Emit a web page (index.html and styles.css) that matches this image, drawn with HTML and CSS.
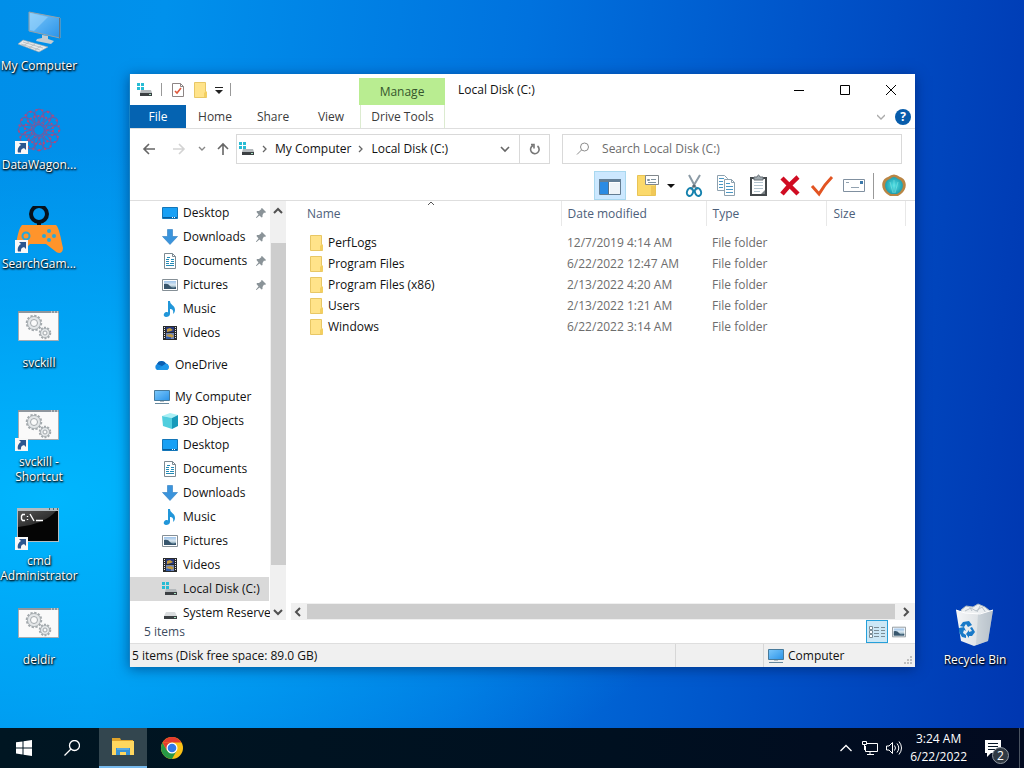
FILE: index.html
```html
<!DOCTYPE html>
<html lang="en">
<head>
<meta charset="utf-8">
<title>Local Disk (C:)</title>
<link rel="stylesheet" href="styles.css">
</head>
<body>
<svg class="sprite" aria-hidden="true">
  <defs>
    <linearGradient id="screen" x1="0" y1="0" x2="1" y2="1"><stop offset="0" stop-color="#7cc8fb"/><stop offset="1" stop-color="#2a93e8"/></linearGradient>
    <linearGradient id="picture" x1="0" y1="0" x2="0" y2="1"><stop offset="0" stop-color="#9dc3ea"/><stop offset=".5" stop-color="#dbe8f0"/><stop offset="1" stop-color="#3d6a80"/></linearGradient>
    <linearGradient id="bin" x1="0" y1="0" x2="1" y2="0"><stop offset="0" stop-color="#f4f6f8"/><stop offset=".6" stop-color="#dfe3e6"/><stop offset="1" stop-color="#b4bdc5"/></linearGradient>
    <linearGradient id="console" x1="0" y1="0" x2="1" y2="1"><stop offset="0" stop-color="#555"/><stop offset="1" stop-color="#181818"/></linearGradient>
    <radialGradient id="shellfill"><stop offset="0" stop-color="#4fe0e4"/><stop offset="1" stop-color="#1f9fb0"/></radialGradient>
  </defs>
  <symbol id="i-drive" viewBox="0 0 16 16"><path d="M0 1h3v3H0zM4 1h3v3H4zM0 5h3v3H0zM4 5h3v3H4z" fill="#27bcd4"/><path d="M4 8h10l1 3H3z" fill="#b4b9bc"/><path d="M3 11h12v3H3z" fill="#3c4043"/><path d="M12 12h2v1h-2z" fill="#a6e3c0"/></symbol>
  <symbol id="i-drive-plain" viewBox="0 0 16 16"><path d="M4 7h9l2 4H2z" fill="#d9dcde"/><path d="M2 11h13v3H2z" fill="#3c4043"/><path d="M12 12h2v1h-2z" fill="#a6e3c0"/></symbol>
  <symbol id="i-desktop" viewBox="0 0 16 16"><path d="M.5 2.500h15v11H.5z" fill="#18a0f5" stroke="#1476b8"/><path d="M1 12h14v1H1z" fill="#075d9c"/><path d="M10 12h1v1h-1zM12 12h1v1h-1z" fill="#fff"/></symbol>
  <symbol id="i-download" viewBox="0 0 16 16"><path d="M5.500.5h5v7h5L8 15.500.5 7.500h5z" fill="#3a94dc" stroke="#2b7cbf" stroke-width=".6"/></symbol>
  <symbol id="i-document" viewBox="0 0 16 16"><path d="M2.500.5h8l3 3v12h-11z" fill="#fff" stroke="#7d8a92"/><path d="M10.500.5v3h3" fill="none" stroke="#7d8a92"/><path d="M5 4.500h3M4 6.500h3M9 6.500h3M4 8.500h3M9 8.500h3M4 10.500h3M8 10.500h4M4 12.500h8" stroke="#248bb6"/></symbol>
  <symbol id="i-picture" viewBox="0 0 16 16"><path d="M.5 2.500h15v11H.5z" fill="#fff" stroke="#858f96"/><path d="M2 4h12v8H2z" fill="url(#picture)"/><path d="M2 7q4-1 6 2t6 1v2H2z" fill="#38566d"/></symbol>
  <symbol id="i-music" viewBox="0 0 16 16"><path d="M6 0h2c0 4 5 4 5 9 0 2-1 3-2 4 1-4-1-5-3-5v5c0 2-2 3-4 3-3 0-3-4 0-5 1 0 1 0 2 .3z" fill="#2196d9"/></symbol>
  <symbol id="i-video" viewBox="0 0 16 16"><path d="M1 1h14v14H1z" fill="#282a2c"/><path d="M2.500 2v12M13.500 2v12" stroke="#e9e9e9" stroke-dasharray="1 1"/><path d="M4 2h8v5H4z" fill="#26387f"/><path d="M4 8h8v6H4z" fill="#7187b8"/><path d="M5 4l3-1 3 2-2 1-4 1zM4 10l5-1 3 2-3 2z" fill="#c49b3d"/><path d="M4 12h5v2H4z" fill="#345da6"/></symbol>
  <symbol id="i-cloud" viewBox="0 0 16 16"><path d="M3 13a3.500 3.500 0 0 1 0-6 5 5 0 0 1 9-.5 3.500 3.500 0 0 1 1 6.500z" fill="#178ae0"/><path d="M3 7a5 5 0 0 1 9-.5L8 9z" fill="#0b5eb1"/><path d="M3 13l9-6.500a3.500 3.500 0 0 1 1 6.500z" fill="#1f98ea"/></symbol>
  <symbol id="i-computer" viewBox="0 0 16 16"><path d="M.5 1.500h15v10H.5z" fill="url(#screen)" stroke="#477a9b"/><path d="M6 12h4v1H6z" fill="#b4c0c7"/><path d="M1 14.500h14" stroke="#67889d"/></symbol>
  <symbol id="i-cube" viewBox="0 0 16 16"><path d="M0 3l8-3 8 2-6 3z" fill="#aaf0f5"/><path d="M0 3l10 2v11L1 13z" fill="#50cede"/><path d="M10 5l6-3v11l-6 3z" fill="#169aba"/></symbol>
  <symbol id="i-folder" viewBox="0 0 14 16"><path d="M.5.5h11v9l1 1v5H.5z" fill="#ffe38a" stroke="#e8c765"/><path d="M10 15v-4l2-2 1 1v5z" fill="#f3cf61"/></symbol>
  <symbol id="i-pin" viewBox="0 0 12 12"><path d="M7 1l4 4-1 1-1-.4L7.500 8v2l-1 .5L4.500 8.500 1.500 11H1v-.5L3.500 7.500 1.500 5l.5-1h2l2.500-2L6 1.500z" fill="#8a9398"/></symbol>
  <symbol id="i-check-doc" viewBox="0 0 14 16"><path d="M1.500 1.500h8l3 3v10h-11z" fill="#fff" stroke="#8d8585"/><path d="M9.500 1.500v3h3" fill="none" stroke="#8d8585"/><path d="M4 9l2 2 4-5" fill="none" stroke="#df583b" stroke-width="1.600"/></symbol>
  <symbol id="i-shortcut" viewBox="0 0 13 13"><path d="M0 0h13v13H0z" fill="#f8f8f8"/><path d="M4 2h7v7L9 7c-3 1-3 2-3 4.500H3C2 8 4 5 6 4z" fill="#2c568f"/></symbol>
  <symbol id="i-gears" viewBox="0 0 48 48"><path d="M3.500 7.500h40v28h-40z" fill="#fafafa" stroke="#a7acb1"/><path d="M3 6h41v2H3z" fill="#8e969d"/><path d="M36 7h1M39 7h1M42 7h1" stroke="#fff"/><g fill="#e4e7e9" stroke="#a3a9ad"><circle cx="19" cy="18" r="7" stroke-width="2.500" stroke-dasharray="2.200 1.460"/><circle cx="19" cy="18" r="6.500" stroke-width=".8"/><circle cx="19" cy="18" r="3.500" fill="#fafafa"/><circle cx="30" cy="28" r="5" stroke-width="2.500" stroke-dasharray="1.900 1.240"/><circle cx="30" cy="28" r="4.500" stroke-width=".8"/><circle cx="30" cy="28" r="2" fill="#fafafa"/></g></symbol>
</svg>

<main class="desktop">
  <nav class="desktop-icons" aria-label="Desktop">
    <button class="shortcut"><svg viewBox="0 0 48 48"><path d="M14 4l31 6v20l-31-7z" fill="url(#screen)" stroke="#93a2ab"/><path d="M45 10v20l-1 1V10z" fill="#66737b"/><path d="M15 5l18 4-14 14-4-1z" fill="#a6d9fb" opacity=".5"/><path d="M27 27l6 1v3l6 2-3 3-15-3 1-2 5-1z" fill="#c3cdd3"/><path d="M8 32l25 7-9 5L3 36z" fill="#e6eaec" stroke="#9da5aa" stroke-width=".6"/><path d="M8 34l20 6M6 36l19 6M14 34l-6 4M20 36l-6 4M26 38l-6 4" stroke="#aab2b7" stroke-width=".7"/></svg><span>My Computer</span></button>
    <button class="shortcut"><svg viewBox="0 0 48 48"><g fill="none" stroke="#7a559d"><g id="petals"><ellipse cx="24" cy="10" rx="5" ry="8"/><ellipse cx="24" cy="36" rx="5" ry="8"/><ellipse cx="11" cy="23" rx="8" ry="5"/><ellipse cx="37" cy="23" rx="8" ry="5"/></g><use href="#petals" transform="rotate(30 24 23)"/><use href="#petals" transform="rotate(60 24 23)"/><circle cx="24" cy="23" r="14" stroke="#b04b7c" stroke-width="2" stroke-dasharray="2 2"/><circle cx="24" cy="23" r="20" stroke="#b04b7c" stroke-width="2" stroke-dasharray="2 4"/><circle cx="24" cy="23" r="8" stroke="#b04b7c" stroke-dasharray="3 2"/></g><use href="#i-shortcut" y="34" width="13" height="13"/></svg><span>DataWagon...</span></button>
    <button class="shortcut"><svg viewBox="0 0 48 48"><circle cx="24" cy="8" r="8" fill="none" stroke="#07121c" stroke-width="4"/><path d="M22 15h4v6h-4z" fill="#07121c"/><path d="M7 19h34c3 2 5 14 7 23 0 6-5 6-8 3l-9-7H15l-7 7c-4 3-8 1-7-6 1-8 3-17 6-20z" fill="#ff942b"/><circle cx="11" cy="30" r="3.500" fill="none" stroke="#27a7da" stroke-width="2"/><g fill="#27a7da"><circle cx="34" cy="25" r="2"/><circle cx="34" cy="34" r="2"/><circle cx="29" cy="30" r="2"/><circle cx="39" cy="30" r="2"/></g><use href="#i-shortcut" y="34" width="13" height="13"/></svg><span>SearchGam...</span></button>
    <button class="shortcut"><svg viewBox="0 0 48 48"><use href="#i-gears" width="48" height="48"/></svg><span>svckill</span></button>
    <button class="shortcut"><svg viewBox="0 0 48 48"><use href="#i-gears" width="48" height="48"/><use href="#i-shortcut" y="34" width="13" height="13"/></svg><span>svckill - Shortcut</span></button>
    <button class="shortcut"><svg viewBox="0 0 48 48"><path d="M2 5h42v34H2z" fill="#b4bcc1"/><path d="M3 8h40v30H3z" fill="#050505"/><path d="M3 8h38Q30 21 3 24z" fill="url(#console)"/><path d="M34 6h1M38 6h1M42 6h1" stroke="#566" stroke-width="2"/><path d="M10 11.500H7.500L6.500 13v3l1 1.500H10M12.500 13v1M12.500 16v1M15 11l4 7M21 17.500h7" fill="none" stroke="#fff" stroke-width="1.400"/><use href="#i-shortcut" y="34" width="13" height="13"/></svg><span>cmd Administrator</span></button>
    <button class="shortcut"><svg viewBox="0 0 48 48"><use href="#i-gears" width="48" height="48"/></svg><span>deldir</span></button>
  </nav>

  <button class="shortcut recycle"><svg viewBox="0 0 48 48"><path d="M10 8l5-4 7 1 5-3 7 3 5 4-3 8H11z" fill="#edf0f2" stroke="#a9b7c3"/><path d="M14 9l6-3 5 3 6-4 4 6M18 4l3 5M29 4l-3 6" fill="none" stroke="#b7c0c7"/><path d="M5 8l9 3 15 1 13-4-5 31-14 5-13-5z" fill="url(#bin)"/><path d="M27 12l15-4-5 31-12 4z" fill="#b9c4cd" opacity=".55"/><path d="M5 8l9 3 15 1 13-4" fill="none" stroke="#fff"/><g fill="#197ac8"><path d="M12 20l6-1 3 4-4 2-2-3-2 3-4-1z"/><path d="M21 25l3 5-3 4h-3v2l-3-4 3-4v2l3-1-2-3z"/><path d="M8 26l5-1 2 4-2-1-1 3 3 2v3l-4-1-3-5z"/></g></svg><span>Recycle Bin</span></button>

  <section class="window" aria-label="Local Disk (C:)">
    <header class="caption">
      <div class="quick">
        <svg class="s16"><use href="#i-drive"/></svg>
        <i class="bar"></i>
        <button aria-label="Properties"><svg class="s16" viewBox="0 0 14 16"><use href="#i-check-doc" width="14" height="16"/></svg></button>
        <button aria-label="New folder"><svg class="s14"><use href="#i-folder"/></svg></button>
        <button class="more" aria-label="Customize"><svg class="s8" viewBox="0 0 8 8"><path d="M0 1.500h8" stroke="#222"/><path d="M0 4h8L4 8z" fill="#222"/></svg></button>
        <i class="bar"></i>
      </div>
      <div class="manage">Manage</div>
      <h1>Local Disk (C:)</h1>
      <div class="controls">
        <button aria-label="Minimize"><svg class="s12" viewBox="0 0 12 12"><path d="M1 6.500h10" stroke="#000"/></svg></button>
        <button aria-label="Maximize"><svg class="s12" viewBox="0 0 12 12"><path d="M1.500 1.500h9v9h-9z" fill="none" stroke="#000"/></svg></button>
        <button aria-label="Close"><svg class="s12" viewBox="0 0 12 12"><path d="M1 1l10 10M11 1L1 11" stroke="#000"/></svg></button>
      </div>
    </header>

    <div class="tabs">
      <button class="file">File</button>
      <button class="tab">Home</button>
      <button class="tab">Share</button>
      <button class="tab">View</button>
      <button class="drive-tools">Drive Tools</button>
      <div class="help">
        <button aria-label="Expand ribbon"><svg class="s8" viewBox="0 0 8 8"><path d="M0 2l4 4 4-4" fill="none" stroke="#aaa" stroke-width="1.300"/></svg></button>
        <button class="question" aria-label="Help">?</button>
      </div>
    </div>

    <div class="navbar">
      <div class="history">
        <button aria-label="Back"><svg class="s14" viewBox="0 0 14 14"><path d="M13 7H2M7 2L2 7l5 5" fill="none" stroke="#666" stroke-width="1.600"/></svg></button>
        <button aria-label="Forward"><svg class="s14" viewBox="0 0 14 14"><path d="M1 7h11M7 2l5 5-5 5" fill="none" stroke="#d3d3d3" stroke-width="1.600"/></svg></button>
        <button class="recent" aria-label="Recent locations"><svg class="s8" viewBox="0 0 8 8"><path d="M1 2l3 3 3-3" fill="none" stroke="#888" stroke-width="1.400"/></svg></button>
        <button class="up" aria-label="Up"><svg class="s14" viewBox="0 0 14 14"><path d="M7 13V2M2 7l5-5 5 5" fill="none" stroke="#666" stroke-width="1.600"/></svg></button>
      </div>
      <div class="address">
        <svg class="s16"><use href="#i-drive"/></svg>
        <svg class="s8 sep" viewBox="0 0 8 8"><path d="M2 1l3 3-3 3" fill="none" stroke="#666" stroke-width="1.300"/></svg>
        <button>My Computer</button>
        <svg class="s8 sep" viewBox="0 0 8 8"><path d="M2 1l3 3-3 3" fill="none" stroke="#666" stroke-width="1.300"/></svg>
        <button>Local Disk (C:)</button>
        <button class="drop" aria-label="Previous locations"><svg class="s10" viewBox="0 0 10 10"><path d="M1 3l4 4 4-4" fill="none" stroke="#666" stroke-width="1.600"/></svg></button>
        <button class="refresh" aria-label="Refresh"><svg class="s12" viewBox="0 0 12 12"><path d="M8.500 3A4.300 4.300 0 1 1 4 2.500M2 1.500h3v4" fill="none" stroke="#777" stroke-width="1.600"/></svg></button>
      </div>
      <label class="search">
        <svg class="s14" viewBox="0 0 14 14"><circle cx="8.500" cy="5" r="4" fill="none" stroke="#8c8c8c"/><path d="M5.500 8L1 12.500" stroke="#8c8c8c"/></svg>
        <input type="text" placeholder="Search Local Disk (C:)" aria-label="Search Local Disk (C:)">
      </label>
    </div>

    <div class="toolbar">
      <button class="on" aria-label="Navigation pane"><svg class="s24" viewBox="0 0 24 24"><path d="M1.500 5.500h21v15h-21z" fill="#fff" stroke="#637c91"/><path d="M1 5h22v3H1z" fill="#637f96"/><path d="M2 8h8v12H2z" fill="#2b8be3"/><path d="M10 8h1v12h-1z" fill="#54718b"/><path d="M12 9h10v11H12z" fill="#eef4f8"/></svg></button>
      <button aria-label="Layout"><svg class="s24" viewBox="0 0 24 24"><path d="M1.500 1.500h18v20h-18z" fill="#fbd96b" stroke="#e9c455"/><path d="M15 21V12h4v9z" fill="#f1c858"/><path d="M9.500 1.500h13v9h-13z" fill="#fff" stroke="#81878b"/><path d="M11.500 5.500h2v1h-2zM15 5.500h5M12 8.500h8" fill="none" stroke="#7f919d"/></svg></button>
      <button class="more" aria-label="More layouts"><svg class="s8" viewBox="0 0 8 8"><path d="M0 2h8L4 6z" fill="#111"/></svg></button>
      <button aria-label="Cut"><svg class="s24" viewBox="0 0 24 24"><path d="M7 1l8 15M18 1L9 16" stroke="#8b9aa5" stroke-width="2"/><circle cx="12" cy="12" r="1.500" fill="#5a6870"/><ellipse cx="8" cy="18" rx="3" ry="4" transform="rotate(20 8 18)" fill="none" stroke="#1682ae" stroke-width="2"/><ellipse cx="16" cy="18" rx="3" ry="4" transform="rotate(-20 16 18)" fill="none" stroke="#1682ae" stroke-width="2"/></svg></button>
      <button aria-label="Copy"><svg class="s24" viewBox="0 0 24 24"><g fill="#fff" stroke="#8ea1ae"><path d="M3.500 1.500h7l3 3v12h-10z"/><path d="M10.500 5.500h7l3 3v13h-10z"/><path d="M17.500 5.500v3h3" fill="none"/></g><path d="M5 4.500h5M5 7.500h4M5 10.500h4M5 13.500h4M12 9.500h4M12 12.500h7M12 15.500h7M12 18.500h7" stroke="#4a97c4"/></svg></button>
      <button aria-label="Paste"><svg class="s24" viewBox="0 0 24 24"><path d="M4 3h17v19H4z" fill="#43484b"/><path d="M6 5h13v15H6z" fill="#fff"/><path d="M8 3h3q1.500-4 3 0h3v3H8z" fill="#a1abb0" stroke="#687178"/><path d="M8 8.500h9M8 11.500h9M8 14.500h9M8 17.500h6" stroke="#b3c4cf"/><path d="M19 20h-4l4-4z" fill="#7b8286"/></svg></button>
      <button aria-label="Delete"><svg class="s24" viewBox="0 0 24 24"><path d="M4 4q6 6 16 16M20 3Q12 10 4 20" fill="none" stroke="#d00c22" stroke-width="4.500"/></svg></button>
      <button aria-label="Properties"><svg class="s24" viewBox="0 0 24 24"><path d="M2 12l7 8q5-9 13-17" fill="none" stroke="#e25422" stroke-width="3"/></svg></button>
      <button aria-label="Rename"><svg class="s24" viewBox="0 0 24 24"><path d="M1.500 5.500h21v12h-21z" fill="#fff" stroke="#8090a0"/><path d="M4 8.500h3M9 13.500h8" stroke="#92a2b0"/><path d="M18 7h3v3h-3z" fill="#3b78aa"/></svg></button>
      <i class="bar tall"></i>
      <button aria-label="Shell"><svg class="s24" viewBox="0 0 24 24"><path d="M5 20C-2 15-1 5 6 3q6-5 12 0c7 2 8 12 1 17l-3 2H8z" fill="#b98544"/><path d="M6 18C1 13 3 6 8 5q4-4 8 0c5 1 7 8 2 13l-3 2H9z" fill="url(#shellfill)"/><path d="M12 19V6M11 19L8 8M13 19l3-11" stroke="#8eeae6" stroke-width=".5"/></svg></button>
    </div>

    <div class="content">
      <aside class="tree">
        <ul>
          <li><svg class="s16"><use href="#i-desktop"/></svg>Desktop<svg class="pin"><use href="#i-pin"/></svg></li>
          <li><svg class="s16"><use href="#i-download"/></svg>Downloads<svg class="pin"><use href="#i-pin"/></svg></li>
          <li><svg class="s16"><use href="#i-document"/></svg>Documents<svg class="pin"><use href="#i-pin"/></svg></li>
          <li><svg class="s16"><use href="#i-picture"/></svg>Pictures<svg class="pin"><use href="#i-pin"/></svg></li>
          <li><svg class="s16"><use href="#i-music"/></svg>Music</li>
          <li><svg class="s16"><use href="#i-video"/></svg>Videos</li>
          <li class="root"><svg class="s16"><use href="#i-cloud"/></svg>OneDrive</li>
          <li class="root"><svg class="s16"><use href="#i-computer"/></svg>My Computer</li>
          <li><svg class="s16"><use href="#i-cube"/></svg>3D Objects</li>
          <li><svg class="s16"><use href="#i-desktop"/></svg>Desktop</li>
          <li><svg class="s16"><use href="#i-document"/></svg>Documents</li>
          <li><svg class="s16"><use href="#i-download"/></svg>Downloads</li>
          <li><svg class="s16"><use href="#i-music"/></svg>Music</li>
          <li><svg class="s16"><use href="#i-picture"/></svg>Pictures</li>
          <li><svg class="s16"><use href="#i-video"/></svg>Videos</li>
          <li class="selected"><svg class="s16"><use href="#i-drive"/></svg>Local Disk (C:)</li>
          <li><svg class="s16"><use href="#i-drive-plain"/></svg>System Reserved</li>
        </ul>
        <div class="vscroll">
          <svg class="s10" viewBox="0 0 10 10"><path d="M1 7l4-4 4 4" fill="none" stroke="#505050" stroke-width="2"/></svg>
          <div class="vthumb"></div>
          <svg class="s10" viewBox="0 0 10 10"><path d="M1 3l4 4 4-4" fill="none" stroke="#505050" stroke-width="2"/></svg>
        </div>
      </aside>

      <div class="files">
        <table>
          <thead>
            <tr><th class="name">Name<svg class="sort" viewBox="0 0 8 5"><path d="M1 4l3-3 3 3" fill="none" stroke="#555"/></svg></th><th class="date">Date modified</th><th class="type">Type</th><th class="size">Size</th></tr>
          </thead>
          <tbody>
            <tr><td><span class="item"><svg class="s14"><use href="#i-folder"/></svg>PerfLogs</span></td><td>12/7/2019 4:14 AM</td><td>File folder</td><td></td></tr>
            <tr><td><span class="item"><svg class="s14"><use href="#i-folder"/></svg>Program Files</span></td><td>6/22/2022 12:47 AM</td><td>File folder</td><td></td></tr>
            <tr><td><span class="item"><svg class="s14"><use href="#i-folder"/></svg>Program Files (x86)</span></td><td>2/13/2022 4:20 AM</td><td>File folder</td><td></td></tr>
            <tr><td><span class="item"><svg class="s14"><use href="#i-folder"/></svg>Users</span></td><td>2/13/2022 1:21 AM</td><td>File folder</td><td></td></tr>
            <tr><td><span class="item"><svg class="s14"><use href="#i-folder"/></svg>Windows</span></td><td>6/22/2022 3:14 AM</td><td>File folder</td><td></td></tr>
          </tbody>
        </table>
        <div class="hscroll">
          <svg class="s10" viewBox="0 0 10 10"><path d="M7 1L3 5l4 4" fill="none" stroke="#505050" stroke-width="2"/></svg>
          <div class="hthumb"></div>
          <svg class="s10" viewBox="0 0 10 10"><path d="M3 1l4 4-4 4" fill="none" stroke="#505050" stroke-width="2"/></svg>
        </div>
      </div>
    </div>

    <div class="details">
      <span>5 items</span>
      <button class="view on" aria-label="Details view"><svg class="s18" viewBox="0 0 18 18"><path d="M1.500 3.500h3v3h-3zM1.500 7.500h3v3h-3zM1.500 11.500h3v3h-3z" fill="#fff" stroke="#7a8d96"/><path d="M6 4.500h5M13 4.500h4M6 7.500h5M13 7.500h4M6 10.500h5M13 10.500h4M6 13.500h5M13 13.500h4" stroke="#7b8d96"/></svg></button>
      <button class="view" aria-label="Large icons view"><svg class="s14"><use href="#i-picture"/></svg></button>
    </div>
    <footer class="status">
      <span class="summary">5 items (Disk free space: 89.0 GB)</span>
      <span class="blank"></span>
      <span class="zone"><svg class="s16"><use href="#i-computer"/></svg>Computer</span>
      <svg class="s10 grip" viewBox="0 0 10 10"><path d="M7 1h2v2H7zM4 4h2v2H4zM7 4h2v2H7zM1 7h2v2H1zM4 7h2v2H4zM7 7h2v2H7z" fill="#bfbfbf"/></svg>
    </footer>
  </section>
</main>

<footer class="taskbar">
  <button aria-label="Start"><svg class="s16" viewBox="0 0 16 16"><path d="M0 2.300L6.500 1.400v6H0zM7.500 1.200L16 0v7.400H7.500zM0 8.500h6.500v6L0 13.600zM7.500 8.500H16V16l-8.500-1.200z" fill="#fff"/></svg></button>
  <button aria-label="Search"><svg class="s16" viewBox="0 0 16 16"><circle cx="10.500" cy="5.500" r="5" fill="none" stroke="#fff" stroke-width="1.300"/><path d="M7 9L.5 15.500" stroke="#fff" stroke-width="1.300"/></svg></button>
  <button class="running" aria-label="File Explorer"><svg class="s22" viewBox="0 0 22 22"><path d="M0 2h8l1 2h12v4H0z" fill="#dfa32b"/><path d="M0 5h22v14H0z" fill="#ffd75f"/><path d="M4 12h14v7h-4v-3H8v3H4z" fill="#3692d5"/><path d="M5 12h12v2H5z" fill="#5aa9e0"/></svg></button>
  <button class="chrome" aria-label="Google Chrome"><svg class="s22" viewBox="0 0 22 22"><circle cx="11" cy="11" r="11" fill="#fbc116"/><path d="M11 5.500L1.500 5.500A11 11 0 0 1 20.500 5.500z" fill="#e33b2e"/><path d="M1.500 5.500A11 11 0 0 0 11 22l4.500-8-4.500 2-5-2.500z" fill="#279846"/><path d="M1.500 5.500L6 13.500l5-2.500V5.500z" fill="#e33b2e"/><circle cx="11" cy="11" r="5.500" fill="#fff"/><circle cx="11" cy="11" r="4.300" fill="#3279e8"/></svg></button>
  <div class="tray">
    <svg class="s16" viewBox="0 0 16 16"><path d="M2.500 11L8 5.500l5.500 5.500" fill="none" stroke="#fff" stroke-width="1.300"/></svg>
    <svg class="s16" viewBox="0 0 16 16"><path d="M5 3.500h10.500v8H3.500V6M8 12v3M5 14.500h7M.5 1.500h4v3h-4zM2.500 5v5" fill="none" stroke="#fff"/></svg>
    <svg class="s16" viewBox="0 0 16 16"><path d="M.5 6h2.500l3.500-3.500v11L3 10H.5z" fill="none" stroke="#fff"/><path d="M8.500 5.500q2 2.500 0 5M11 3.500q3.500 4.500 0 9M13 1.500q5 6.500 0 13" fill="none" stroke="#fff"/></svg>
    <time datetime="2022-06-22T03:24">3:24 AM<br>6/22/2022</time>
    <button class="notify" aria-label="Notifications"><svg class="s18" viewBox="0 0 18 18"><path d="M1 1h16v13H7l-4 4v-4H1z" fill="#fff"/><path d="M4 4.500h10M4 7.500h10M4 10.500h7" stroke="#071727"/></svg><span>2</span></button>
  </div>
</footer>
</body>
</html>
```
FILE: styles.css
```css
* {
  box-sizing: border-box;
}

body {
  margin: 0;
  height: 100vh;
  display: flex;
  flex-direction: column;
  overflow: hidden;
  font: 12px/16px "Segoe UI", "Open Sans", "Noto Sans", sans-serif;
  color: #111;
  background:
    radial-gradient(ellipse at 5% 65%, rgba(0, 184, 255, .95), rgba(0, 160, 245, 0) 50%),
    linear-gradient(96deg, #008fe9 0%, #0091ec 15%, #0072de 48%, #0052c8 75%, #0036b0 100%);
}

button {
  padding: 0;
  border: 0;
  background: none;
  font: inherit;
  color: inherit;
  display: flex;
  align-items: center;
  justify-content: center;
}

svg {
  flex: none;
  display: block;
}

.sprite {
  position: absolute;
  width: 0;
  height: 0;
}

.s8 { width: 8px; height: 8px; }
.s10 { width: 10px; height: 10px; }
.s12 { width: 12px; height: 12px; }
.s14 { width: 14px; height: 16px; }
.s16 { width: 16px; height: 16px; }
.s18 { width: 18px; height: 18px; }
.s22 { width: 22px; height: 22px; }
.s24 { width: 24px; height: 24px; }

.bar {
  width: 1px;
  height: 13px;
  background: #999;
}

.bar.tall {
  height: 26px;
  margin: 0 4px 0 3px;
}

/* Desktop */
.desktop {
  flex: 1;
  min-height: 0;
  position: relative;
}

.desktop-icons {
  display: grid;
  grid-auto-rows: 99px;
  width: 78px;
}

.shortcut {
  width: 78px;
  padding-top: 8px;
  flex-direction: column;
  justify-content: flex-start;
  gap: 2px;
  color: #fff;
  line-height: 15px;
  text-align: center;
  text-shadow: 1px 1px 2px #000, 0 1px 2px #000;
}

.shortcut svg {
  width: 48px;
  height: 48px;
}

.recycle {
  position: absolute;
  right: 10px;
  bottom: 61px;
}

/* Window */
.window {
  position: absolute;
  inset: 74px 109px 61px 129px;
  display: flex;
  flex-direction: column;
  background: #fff;
  border-left: 1px solid #1883c5;
  box-shadow: 0 2px 12px rgba(0, 20, 70, .5);
}

.caption {
  height: 31px;
  display: flex;
}

.quick {
  width: 229px;
  padding-left: 7px;
  display: flex;
  align-items: center;
  gap: 8px;
}

.quick .more {
  margin: 0 -1px;
}

.manage {
  width: 86px;
  margin-top: 4px;
  padding-top: 6px;
  background: #b9ed91;
  color: #35562d;
  text-align: center;
}

.caption h1 {
  flex: 1;
  margin: 0;
  padding-left: 13px;
  font-size: 12px;
  font-weight: 400;
  line-height: 32px;
}

.controls {
  display: flex;
  padding-right: 1px;
}

.controls button {
  width: 46px;
}

.tabs {
  height: 24px;
  display: flex;
  color: #3b3b3b;
  border-bottom: 1px solid #dedede;
}

.file {
  width: 56px;
  background: #0563b1;
  color: #fff;
}

.tab {
  width: 58px;
}

.drive-tools {
  width: 85px;
  border: solid #dcebd0;
  border-width: 0 1px;
}

.help {
  flex: 1;
  display: flex;
  justify-content: flex-end;
  gap: 10px;
  padding-right: 4px;
  align-items: center;
}

.question {
  width: 16px;
  height: 16px;
  border-radius: 50%;
  background: #075cab;
  color: #fff;
  font-weight: 700;
}

.navbar {
  display: flex;
  padding: 5px 13px 4px 12px;
}

.history {
  width: 94px;
  display: flex;
  align-items: center;
  gap: 16px;
}

.history .recent {
  margin: 0 -4px;
}

.history .up {
  margin-left: -2px;
}

.address {
  flex: 312;
  height: 30px;
  display: flex;
  align-items: center;
  gap: 7px;
  padding-left: 2px;
  border: 1px solid #d9d9d9;
}

.address .sep {
  margin: 0 -1px;
}

.address .drop {
  margin-left: auto;
  margin-right: 2px;
}

.refresh {
  width: 30px;
  height: 100%;
  border-left: 1px solid #d9d9d9;
}

.search {
  flex: 327;
  margin-left: 12px;
  display: flex;
  align-items: center;
  gap: 12px;
  padding-left: 13px;
  border: 1px solid #d9d9d9;
}

.search input {
  flex: 1;
  min-width: 0;
  padding: 0;
  border: 0;
  outline: 0;
  font: inherit;
}

.search input::placeholder {
  color: #6d6d6d;
  opacity: 1;
}

.toolbar {
  height: 33px;
  padding: 3px 5px 0 0;
  display: flex;
  justify-content: flex-end;
  align-items: center;
  border-bottom: 1px solid #dedede;
}

.toolbar button {
  width: 32px;
  height: 29px;
}

.toolbar button.on {
  background: #cce8ff;
  border: 1px solid #a9d8ef;
  margin-right: 6px;
}

.toolbar button.more {
  width: 14px;
}

.content {
  flex: 1;
  min-height: 0;
  display: flex;
}

.tree {
  width: 156px;
  display: flex;
  overflow: hidden;
}

.tree ul {
  flex: 1;
  margin: 0;
  padding: 0;
  overflow: hidden;
  list-style: none;
}

.tree li {
  height: 24px;
  padding-left: 32px;
  display: flex;
  align-items: center;
  gap: 5px;
  white-space: nowrap;
}

.tree .root {
  margin-top: 8px;
  padding-left: 24px;
}

.tree .selected {
  margin-right: 1px;
  background: #d9d9d9;
}

.pin {
  width: 12px;
  height: 12px;
  margin-left: auto;
  margin-right: 3px;
}

.vscroll {
  width: 16px;
  display: flex;
  flex-direction: column;
  align-items: center;
  padding: 5px 0 3px;
  background: #f0f0f0;
}

.vthumb {
  flex: 1;
  width: 15px;
  margin: 27px 0 42px;
  background: #cdcdcd;
}

.files {
  flex: 1;
  min-width: 0;
  display: flex;
  flex-direction: column;
  padding-left: 5px;
}

table {
  width: calc(100% - 19px);
  margin-left: 10px;
  table-layout: fixed;
  border-collapse: collapse;
  color: #6d6d6d;
}

th {
  height: 25px;
  padding: 1px 6px 0;
  text-align: left;
  font-weight: 400;
  color: #4c607a;
  border-right: 1px solid #e8e8e8;
}

.name { width: 260px; position: relative; }
.date { width: 24%; }
.type { width: 20%; }

.sort {
  position: absolute;
  top: 0;
  left: 50%;
  width: 8px;
  height: 5px;
  margin-left: -4px;
}

td {
  height: 21px;
  padding: 0 6px;
  white-space: nowrap;
}

tbody::before {
  content: "";
  display: block;
  height: 6px;
}

.item {
  display: flex;
  align-items: center;
  gap: 4px;
  padding-left: 3px;
  color: #111;
}

.hscroll {
  height: 17px;
  margin-top: auto;
  padding: 0 4px 0 2px;
  display: flex;
  align-items: center;
  gap: 4px;
  background: #f0f0f0;
}

.hthumb {
  flex: 1;
  height: 15px;
  background: #cdcdcd;
}

.hscroll .s10:last-child {
  margin-left: 2px;
}

.details {
  height: 23px;
  display: flex;
  align-items: center;
  padding: 0 5px 0 14px;
  color: #3d4c60;
}

.details span {
  flex: 1;
}

.view {
  width: 22px;
  height: 23px;
}

.view.on {
  background: #cce8f6;
  border: 1px solid #26a0da;
}

.status {
  height: 24px;
  display: flex;
  align-items: stretch;
  background: #f0f0f0;
  border-top: 1px solid #dedede;
  line-height: 23px;
}

.summary {
  flex: 1;
  padding-left: 2px;
}

.blank {
  width: 88px;
  border-left: 1px solid #d7d7d7;
}

.zone {
  width: 138px;
  display: flex;
  align-items: center;
  gap: 4px;
  padding-left: 4px;
  border-left: 1px solid #d7d7d7;
}

.grip {
  align-self: flex-end;
  margin: 2px;
}

/* Taskbar */
.taskbar {
  height: 40px;
  display: flex;
  background: linear-gradient(90deg, #001622, #001020 60%, #020a20);
  color: #fff;
}

.taskbar > button {
  width: 48px;
}

.taskbar .running {
  margin-left: 3px;
  background: #33464f;
  border-bottom: 2px solid #76b9ed;
}

.taskbar .chrome {
  width: 50px;
}

.tray {
  flex: 1;
  display: flex;
  align-items: center;
  justify-content: flex-end;
  gap: 8px;
  margin-right: 4px;
  padding-right: 8px;
  border-right: 1px solid #4a5361;
}

.tray time {
  line-height: 18px;
  text-align: center;
}

.notify {
  width: 36px;
  height: 40px;
  position: relative;
}

.notify span {
  position: absolute;
  right: 2px;
  bottom: 4px;
  width: 17px;
  height: 17px;
  border: 1px solid #929aa3;
  border-radius: 50%;
  background: #303943;
  line-height: 15px;
}
```
